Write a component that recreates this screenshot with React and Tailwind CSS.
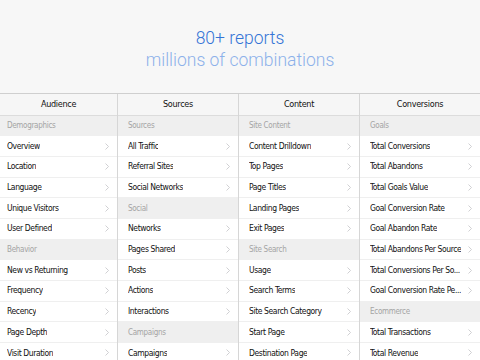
import React from 'react';

// Report catalogue, column by column. `section` rows are the grey group headers.
const COLUMNS = [
  {
    title: 'Audience',
    pad: 'pl-[7px]',
    rows: [
      { section: 'Demographics' },
      'Overview',
      'Location',
      'Language',
      'Unique Visitors',
      'User Defined',
      { section: 'Behavior' },
      'New vs Returning',
      'Frequency',
      'Recency',
      'Page Depth',
      'Visit Duration',
    ],
  },
  {
    title: 'Sources',
    pad: 'pl-[10px]',
    rows: [
      { section: 'Sources' },
      'All Traffic',
      'Referral Sites',
      'Social Networks',
      { section: 'Social' },
      'Networks',
      'Pages Shared',
      'Posts',
      'Actions',
      'Interactions',
      { section: 'Campaigns' },
      'Campaigns',
    ],
  },
  {
    title: 'Content',
    pad: 'pl-[10px]',
    rows: [
      { section: 'Site Content' },
      'Content Drilldown',
      'Top Pages',
      'Page Titles',
      'Landing Pages',
      'Exit Pages',
      { section: 'Site Search' },
      'Usage',
      'Search Terms',
      'Site Search Category',
      'Start Page',
      'Destination Page',
    ],
  },
  {
    title: 'Conversions',
    pad: 'pl-[10px]',
    rows: [
      { section: 'Goals' },
      'Total Conversions',
      'Total Abandons',
      'Total Goals Value',
      'Goal Conversion Rate',
      'Goal Abandon Rate',
      'Total Abandons Per Source',
      'Total Conversions Per So...',
      'Goal Conversion Rate Pe...',
      { section: 'Ecommerce' },
      'Total Transactions',
      'Total Revenue',
    ],
  },
];

const condensed = {
  fontFamily: '"DejaVu Sans Condensed", "Liberation Sans", sans-serif',
};

const Chevron = () => (
  <svg width="4" height="7" viewBox="0 0 4 7" className="shrink-0">
    <path d="M0.5 0.5 L3.5 3.5 L0.5 6.5" fill="none" stroke="#c4c4c8" strokeWidth="0.8" />
  </svg>
);

function Column({ column, first }) {
  return (
    <div className={`flex flex-col bg-white ${first ? '' : 'border-l border-[#d6d6d6]'}`}>
      <div className="h-[21.5px] flex items-center justify-center bg-[#f6f6f6] border-b border-[#dcdcdc] text-[9px] tracking-[-0.3px] text-[#111]">
        {column.title}
      </div>
      {column.rows.map((row, i) =>
        typeof row === 'object' ? (
          <div
            key={i}
            className={`h-[20.7px] flex items-center bg-[#efefef] ${column.pad} text-[8px] tracking-[-0.3px] text-[#a4a4a4]`}
          >
            {row.section}
          </div>
        ) : (
          <div
            key={i}
            className={`h-[20.7px] flex items-center justify-between gap-1 ${column.pad} pr-[8px] border-b border-[#efefef] text-[8.5px] tracking-[-0.4px] text-[#111]`}
          >
            <span className="whitespace-nowrap overflow-hidden min-w-0">{row}</span>
            <Chevron />
          </div>
        )
      )}
    </div>
  );
}

export default function App() {
  return (
    <div className="w-[480px] h-[360px] overflow-hidden bg-[#f7f7f7]">
      <div
        className="h-[93px] flex flex-col items-center justify-center pt-[4px] font-light"
        style={{ fontFamily: 'Roboto, "Open Sans", sans-serif' }}
      >
        <div className="text-[17.5px] leading-[22px] text-[#3474d6]">80+ reports</div>
        <div className="text-[17.5px] leading-[22px] text-[#8cb1ea]">millions of combinations</div>
      </div>
      <div
        className="grid grid-cols-[117px_121px_121px_121px] border-t border-[#cfcfcf]"
        style={condensed}
      >
        {COLUMNS.map((c, i) => (
          <Column key={c.title} column={c} first={i === 0} />
        ))}
      </div>
    </div>
  );
}
